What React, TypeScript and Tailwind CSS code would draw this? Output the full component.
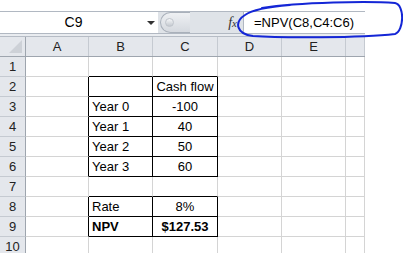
import React from "react";

// ─── sheet data ───
const COLS = [
  { key: "A", w: "w-[63px]" },
  { key: "B", w: "w-[64px]" },
  { key: "C", w: "w-[65px]" },
  { key: "D", w: "w-[64px]" },
  { key: "E", w: "w-[64px]" },
  { key: "F", w: "w-[19px]" },
];

const CELLS: Record<string, { text: string; bold?: boolean }> = {
  C2: { text: "Cash flow" },
  B3: { text: "Year 0" },
  C3: { text: "-100" },
  B4: { text: "Year 1" },
  C4: { text: "40" },
  B5: { text: "Year 2" },
  C5: { text: "50" },
  B6: { text: "Year 3" },
  C6: { text: "60" },
  B8: { text: "Rate" },
  C8: { text: "8%" },
  B9: { text: "NPV", bold: true },
  C9: { text: "$127.53", bold: true },
};

const boxed = (r: number, c: string) =>
  (c === "B" || c === "C") && ((r >= 2 && r <= 6) || r === 8 || r === 9);

const NEXT: Record<string, string> = { A: "B", B: "C", C: "D", D: "E", E: "F", F: "G" };

function Cell({ r, col }: { r: number; col: { key: string; w: string } }) {
  const c = col.key;
  const right = boxed(r, c) || boxed(r, NEXT[c]);
  const bottom = boxed(r, c) || boxed(r + 1, c);
  const cell = CELLS[c + r];
  return (
    <div
      className={`${col.w} h-full shrink-0 flex items-center border-r border-b ${
        right ? "border-r-black" : "border-r-[#d4d4d4]"
      } ${bottom ? "border-b-black" : "border-b-[#d4d4d4]"} ${
        c === "C" ? "justify-center" : "pl-[3px]"
      } ${cell?.bold ? "font-bold" : ""}`}
    >
      {cell?.text}
    </div>
  );
}

export default function App() {
  return (
    <div className="relative w-[403px] h-[253px] bg-white overflow-hidden font-['Liberation_Sans',Arial,sans-serif] text-[13px] text-black">
      <div className="h-[11px]" />

      <div className="w-[365px]">
        {/* formula bar */}
        <div className="flex h-[23px] border-y border-[#b1b8c2] bg-[#dfe3e8]">
          <div className="w-[158px] h-full bg-white flex items-center">
            <span className="flex-1 text-center text-[14px]">C9</span>
            <span className="w-0 h-0 border-l-[4px] border-r-[4px] border-t-[4px] border-l-transparent border-r-transparent border-t-[#333] mr-[3px]" />
          </div>
          <div className="flex-1 flex items-center">
            <div className="ml-[2px] w-[30px] h-[21px] rounded-l-full border border-r-0 border-[#a9b0ba] bg-gradient-to-b from-[#eef0f3] to-[#d5d9df] flex items-center pl-[4px]">
              <span className="w-[9px] h-[9px] rounded-full bg-gradient-to-b from-[#f5f6f8] to-[#c4c9d0] border border-[#c0c5cc]" />
            </div>
            <div className="flex-1" />
            <span className="flex items-baseline font-['Liberation_Serif',serif] italic text-[14px] leading-none text-[#333] mr-[6px]">
              <span>f</span>
              <span className="text-[11px]">x</span>
            </span>
          </div>
          <div className="w-[122px] h-full bg-white border-l border-[#b1b8c2] flex items-center pl-[10px] text-[13px]">
            =NPV(C8,C4:C6)
          </div>
        </div>
        <div className="h-[3px] bg-[#e9ecf0] border-b border-[#b6bcc5]" />

        {/* column headers */}
        <div className="flex h-[20px] bg-[#e4e7ec] border-b border-[#9ea5ae] text-[#222]">
          <div className="w-[26px] h-full border-r border-[#9ea5ae] relative">
            <div className="absolute right-[3px] bottom-[3px] w-[13px] h-[13px] bg-[#cdd1d7] [clip-path:polygon(100%_0,100%_100%,0_100%)]" />
          </div>
          {COLS.map((col) => (
            <div
              key={col.key}
              className={`${col.w} h-full shrink-0 border-r border-[#c5cad1] flex items-center justify-center`}
            >
              {col.key !== "F" && col.key}
            </div>
          ))}
        </div>

        {/* rows */}
        {Array.from({ length: 10 }, (_, i) => i + 1).map((r) => (
          <div key={r} className="flex h-[20px]">
            <div className="w-[26px] h-full shrink-0 bg-[#e4e7ec] border-r border-r-[#9ea5ae] border-b border-b-[#c5cad1] flex items-center justify-center text-[#222]">
              {r}
            </div>
            {COLS.map((col) => (
              <Cell key={col.key} r={r} col={col} />
            ))}
          </div>
        ))}
      </div>

      {/* hand-drawn annotation */}
      <svg className="absolute inset-0 pointer-events-none" width="403" height="253">
        <path
          d="M 262 8 C 300 2, 370 1, 395 3 C 405 5, 404 31, 395 34 C 360 38, 280 38, 253 36 C 236 34, 234 22, 245 15 C 252 10, 265 7, 290 5"
          fill="none"
          stroke="#1426d6"
          strokeWidth="2"
          strokeLinecap="round"
        />
      </svg>
    </div>
  );
}
